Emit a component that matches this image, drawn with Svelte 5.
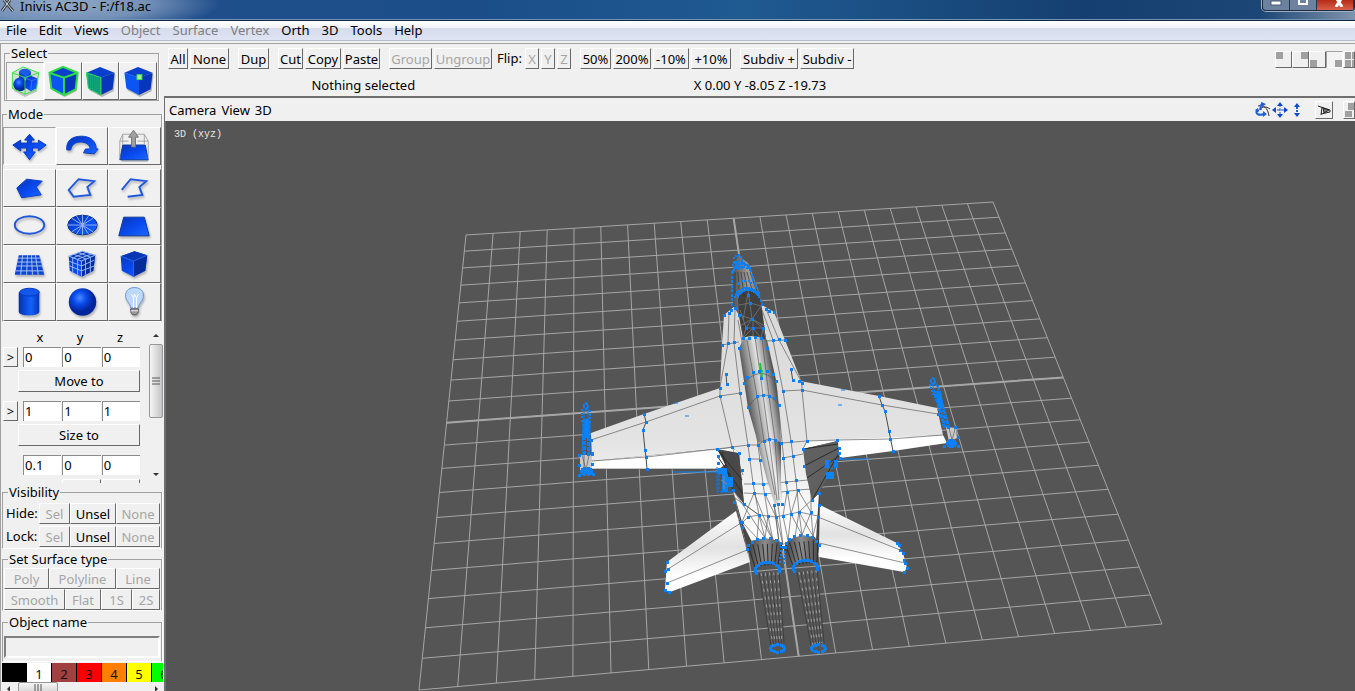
<script lang="ts">
  type Pt = number[];

  const menus = [
    { label: "File" }, { label: "Edit" }, { label: "Views" },
    { label: "Object", off: true }, { label: "Surface", off: true }, { label: "Vertex", off: true },
    { label: "Orth" }, { label: "3D" }, { label: "Tools" }, { label: "Help" }
  ];

  const toolGroups = [
    [{ t: "All", w: 20 }, { t: "None", w: 39 }],
    [{ t: "Dup", w: 31 }],
    [{ t: "Cut", w: 25 }, { t: "Copy", w: 36 }, { t: "Paste", w: 37 }],
    [{ t: "Group", w: 43, off: true }, { t: "Ungroup", w: 58, off: true }]
  ];
  const flips = ["X", "Y", "Z"];
  const scaleGroups = [
    [{ t: "50%", w: 31 }, { t: "200%", w: 38 }, { t: "-10%", w: 36 }, { t: "+10%", w: 40 }],
    [{ t: "Subdiv +", w: 58 }, { t: "Subdiv -", w: 54 }]
  ];

  const selectModes = ["group", "object", "surface", "vertex"];
  const modes = ["move", "rotate", "extrude"];
  const shapes = [
    "polygon", "closed line", "open line",
    "ellipse", "disk", "rectangle",
    "mesh", "box grid", "box",
    "cylinder", "sphere", "light"
  ];
  const axes = ["x", "y", "z"];
  const transforms = [
    { action: "Move to", values: ["0", "0", "0"] },
    { action: "Size to", values: ["1", "1", "1"] }
  ];
  const palette = [
    { n: "", c: "#000000" }, { n: "1", c: "#ffffff" }, { n: "2", c: "#a04040" },
    { n: "3", c: "#ff0000" }, { n: "4", c: "#ff8000" }, { n: "5", c: "#ffff00" }, { n: "6", c: "#00ff00" }
  ];

  let selectMode = "group";
  let mode = "move";
  let objectName = "";

  // ground plane: unit square projected onto four corners
  const corners: Pt[] = [[466, 235], [993, 202], [1162, 624], [419, 690]];
  function project(u: number, v: number): Pt {
    const [[x0, y0], [x1, y1], [x2, y2], [x3, y3]] = corners;
    const dx1 = x1 - x2, dx2 = x3 - x2, sx = x0 - x1 + x2 - x3;
    const dy1 = y1 - y2, dy2 = y3 - y2, sy = y0 - y1 + y2 - y3;
    const det = dx1 * dy2 - dx2 * dy1;
    const g = (sx * dy2 - dx2 * sy) / det;
    const h = (dx1 * sy - sx * dy1) / det;
    const w = g * u + h * v + 1;
    return [
      ((x1 - x0 + g * x1) * u + (x3 - x0 + h * x3) * v + x0) / w,
      ((y1 - y0 + g * y1) * u + (y3 - y0 + h * y3) * v + y0) / w
    ];
  }
  const seg = (a: Pt, b: Pt) => `M${a[0].toFixed(1)} ${a[1].toFixed(1)}L${b[0].toFixed(1)} ${b[1].toFixed(1)}`;
  let gridPath = "";
  for (let i = 0; i <= 20; i++) {
    const t = i / 20;
    gridPath += seg(project(t, 0), project(t, 1)) + seg(project(0, t), project(1, t));
  }
  const axisPath = seg(project(0.5, 0), project(0.5, 1)) + seg(project(0, 0.5), project(1, 0.5));

  const lerp = (a: Pt, b: Pt, t: number): Pt => [a[0] + (b[0] - a[0]) * t, a[1] + (b[1] - a[1]) * t];
  // n lines strung between two edges
  function fan(a: Pt, b: Pt, c: Pt, d: Pt, n: number) {
    let out = "";
    for (let i = 0; i <= n; i++) out += seg(lerp(a, b, i / n), lerp(c, d, i / n));
    return out;
  }
  function ring(cx: number, cy: number, rx: number, ry: number, n: number, from = 0, to = 360) {
    const out: Pt[] = [];
    for (let i = 0; i < n; i++) {
      const a = ((from + ((to - from) * i) / n) * Math.PI) / 180;
      out.push([Math.round(cx + rx * Math.cos(a)), Math.round(cy + ry * Math.sin(a))]);
    }
    return out;
  }
  function strip(a: Pt, b: Pt, n: number, spread: number) {
    const out: Pt[] = [];
    for (let i = 0; i <= n; i++) {
      const p = lerp(a, b, i / n).map(Math.round);
      out.push([p[0] - spread, p[1]], [p[0] + spread, p[1] + 1]);
    }
    return out;
  }

  const vertices: Pt[] = [
    // left wing and side
    [644, 414], [646, 422], [643, 430], [645, 450], [646, 457], [647, 469], [591, 440], [592, 453], [592, 464],
    [720, 388], [720, 396], [732, 447], [740, 393], [748, 445], [749, 459], [760, 460], [742, 470],
    [724, 315], [729, 313], [735, 308], [731, 310], [722, 345], [728, 343], [734, 342], [726, 374], [727, 384],
    [717, 449], [718, 456], [718, 463], [739, 453], [744, 504],
    // right wing and side
    [879, 396], [882, 405], [885, 411], [889, 431], [890, 439], [893, 451], [938, 414], [802, 383], [802, 390],
    [783, 391], [807, 441], [837, 440], [839, 448], [839, 453], [840, 458], [803, 449], [804, 466],
    [766, 309], [769, 311], [774, 312], [773, 340], [779, 339], [785, 340], [791, 369], [793, 380], [799, 381],
    // canopy and spine
    [748, 295], [750, 303], [752, 319], [746, 328], [753, 328], [763, 328], [743, 338], [749, 338], [755, 337], [761, 338],
    [739, 315], [739, 348], [767, 348], [747, 377], [753, 372], [759, 371], [767, 371], [773, 374], [761, 378], [776, 381], [744, 383],
    [748, 407], [757, 396], [763, 395], [769, 396], [774, 398], [779, 405],
    [758, 445], [764, 441], [769, 439], [775, 440], [781, 443], [791, 441], [783, 458], [793, 456],
    // rear deck
    [753, 483], [763, 484], [754, 493], [765, 494], [786, 482], [796, 480], [787, 492], [798, 490],
    [774, 505], [778, 504], [782, 504], [742, 522], [748, 517], [759, 515], [768, 516], [776, 517], [783, 516], [791, 514],
    [799, 512], [811, 512], [818, 517], [733, 490], [734, 502], [740, 522], [742, 527], [812, 500], [819, 493], [819, 505],
    // tail planes
    [667, 562], [668, 569], [665, 571], [667, 583], [665, 590], [669, 592],
    [897, 543], [900, 550], [903, 553], [905, 563], [907, 568], [904, 572], [899, 545], [904, 560],
    // engines
    ...ring(765, 549, 18, 11, 9, 180, 370), ...ring(802, 547, 17, 12, 9, 180, 370),
    ...ring(767, 570, 12, 8, 14, 160, 380), ...ring(805, 568, 12, 8, 14, 160, 380),
    ...ring(777, 648, 7, 4, 12), ...ring(818, 648, 7, 4, 12),
    // wing tips
    ...ring(586, 471, 5, 3, 10), ...ring(951, 443, 4, 3, 10),
    [579, 455], [592, 454], [579, 465], [579, 475], [593, 474],
    [955, 427], [958, 437], [944, 446], [958, 446]
  ];

  const denseVertices: Pt[] = [
    // nose
    ...ring(738, 260, 4, 5, 9), ...ring(739, 265, 6, 4, 12), ...ring(742, 269, 8, 5, 14, 180, 360), ...ring(742, 272, 9, 5, 12, 180, 360),
    ...strip([732, 272], [732, 304], 7, 0), ...strip([752, 275], [762, 304], 7, 0),
    ...ring(745, 284, 7, 3, 6, 180, 360), ...ring(747, 299, 12, 11, 18, 190, 350), ...ring(748, 297, 10, 7, 14, 180, 360),
    ...strip([783, 547], [782, 562], 4, 2),
    // wing tip rails
    ...ring(586, 406, 2, 3, 7), ...strip([586, 410], [586, 421], 3, 4),
    ...ring(933, 381, 2, 3, 7), ...strip([934, 385], [937, 394], 3, 4)
  ];
  const rails = [...strip([586, 420], [586, 454], 14, 2), ...strip([936, 392], [946, 427], 14, 2)];
</script>

<svelte:head><title>AC3D</title></svelte:head>

<svg class="defs" width="0" height="0" aria-hidden="true">
  <defs>
    <linearGradient id="blue" x1="0" y1="0" x2="1" y2="1">
      <stop offset="0" stop-color="#0b36b0" /><stop offset="0.5" stop-color="#0848ee" /><stop offset="1" stop-color="#1b68ff" />
    </linearGradient>
    <linearGradient id="tube"><stop offset="0" stop-color="#0530b0" /><stop offset="0.6" stop-color="#1262ff" /><stop offset="1" stop-color="#0535b8" /></linearGradient>
    <radialGradient id="ball" cx="0.4" cy="0.35"><stop offset="0" stop-color="#4a8cff" /><stop offset="0.45" stop-color="#0b4dee" /><stop offset="1" stop-color="#02249a" /></radialGradient>
    <linearGradient id="spine" gradientUnits="userSpaceOnUse" x1="742" y1="383" x2="776" y2="377">
      <stop offset="0" stop-color="#444" /><stop offset="0.24" stop-color="#8c8c8c" /><stop offset="0.55" stop-color="#e2e2e2" />
      <stop offset="0.75" stop-color="#a4a4a4" /><stop offset="1" stop-color="#3d3d3d" />
    </linearGradient>
    <linearGradient id="tailspine" gradientUnits="userSpaceOnUse" x1="757" y1="460" x2="782" y2="455">
      <stop offset="0" stop-color="#555" /><stop offset="0.3" stop-color="#bbb" /><stop offset="0.6" stop-color="#f0f0f0" /><stop offset="1" stop-color="#4d4d4d" />
    </linearGradient>
    <linearGradient id="skin" gradientUnits="userSpaceOnUse" x1="0" y1="310" x2="0" y2="545">
      <stop offset="0" stop-color="#d9d9d9" /><stop offset="0.55" stop-color="#e3e3e3" /><stop offset="0.8" stop-color="#f6f6f6" /><stop offset="1" stop-color="#fff" />
    </linearGradient>
    <linearGradient id="tailplane" x1="0" y1="0" x2="0" y2="1"><stop offset="0" stop-color="#fff" /><stop offset="0.45" stop-color="#e2e2e2" /><stop offset="0.8" stop-color="#fff" /></linearGradient>
    <linearGradient id="nose"><stop offset="0" stop-color="#4c4c4c" /><stop offset="0.5" stop-color="#a0a0a0" /><stop offset="1" stop-color="#484848" /></linearGradient>
    <linearGradient id="nozzle"><stop offset="0" stop-color="#3d3d3d" /><stop offset="0.5" stop-color="#8b8b8b" /><stop offset="1" stop-color="#4a4a4a" /></linearGradient>
  </defs>
</svg>

<div class="window">
  <header class="titlebar">
    <svg class="logo" width="16" height="12" viewBox="0 0 16 12">
      <path d="M2 11L7 4L13 11M7 4L4 0M7 4L10 0" fill="none" stroke="#3b4048" stroke-width="3" />
      <path d="M2 11L7 4L13 11M7 4L4 0M7 4L10 0" fill="none" stroke="#d5d8dc" stroke-width="1" />
    </svg>
    <span class="title">Inivis AC3D - F:/f18.ac</span>
    <div class="controls">
      <button aria-label="Minimize"><svg width="12" height="6"><rect x="1" y="1" width="10" height="4" fill="#fff" stroke="#4a5a70" /></svg></button>
      <button aria-label="Maximize"><svg width="12" height="6"><path d="M2 0V4H10V0" fill="none" stroke="#fff" stroke-width="2" /></svg></button>
      <button class="close" aria-label="Close"><svg width="14" height="7"><path d="M4 7L7 2L10 7M7 2L5 -1M7 2L9 -1" fill="none" stroke="#fff" stroke-width="3" /></svg></button>
    </div>
  </header>

  <nav class="menubar">
    {#each menus as m}
      <button disabled={m.off}>{m.label}</button>
    {/each}
  </nav>

  <div class="work">
    <aside class="side">
      <fieldset class="select">
        <legend>Select</legend>
        {#each selectModes as s}
          <button class="bevel" class:down={selectMode === s} aria-label={s} on:click={() => (selectMode = s)}>
            <svg width="36" height="35" viewBox="0 0 36 36">
              {#if s === "group"}
                <path d="M5 9L16 3L32 9L30 26L18 31L5 25Z" fill="#d7dbd8" />
                <path d="M6 25L18 31L30 26L31 28L18 34L7 28Z" fill="#0003" />
                <path d="M12 8V15H24V8Z" fill="url(#tube)" /><ellipse cx="18" cy="8" rx="6" ry="3" fill="#1b5ce6" />
                <circle cx="13" cy="21" r="7" fill="url(#ball)" />
                <path d="M19 15L24 12L31 15L30 25L24 28L19 25Z" fill="url(#blue)" /><path d="M19 15L25 17L31 15M25 17L24 28" stroke="#2f78ff" fill="none" />
                <path d="M5 9L16 3L32 9L30 26L18 31L5 25ZM5 9L18 14L32 9M18 14V31" fill="none" stroke="#34e03c" stroke-width="1" />
              {:else}
                <path d="M4 9L18 3L33 9L31 26L19 32L6 25Z" fill="#000" opacity="0.25" transform="translate(1 2)" />
                <path d="M4 9L18 3L33 9L19 14Z" fill="#0a3fce" />
                <path d="M4 9L19 14V32L6 25Z" fill="#0b55f5" />
                <path d="M33 9L19 14V32L31 26Z" fill="#0735bb" />
                {#if s === "object"}
                  <path d="M4 9L18 3L33 9L31 26L19 32L6 25ZM4 9L19 14L33 9M19 14V32" fill="none" stroke="#30dc45" stroke-width="2" />
                {:else if s === "surface"}
                  <path d="M4 9L19 14V32L6 25Z" fill="#14b080" stroke="#2fe050" />
                  <path d="M7 11V25M9 12V27M11 12V28M13 13V29M15 14V30M17 14V31" stroke="#086a72" stroke-dasharray="1 1" />
                {:else}
                  <rect x="17" y="11" width="5" height="5" fill="#a9f58c" stroke="#3de04b" />
                {/if}
              {/if}
            </svg>
          </button>
        {/each}
      </fieldset>

      <fieldset class="mode">
        <legend>Mode</legend>
        <div class="cells">
          {#each modes as m}
            <button class="bevel" class:down={mode === m} aria-label={m} on:click={() => (mode = m)}>
              <svg class:icon={m !== "extrude"} width="51" height="36" viewBox="0 0 52 36">
                {#if m === "move"}
                  <path d="M26 6L31 12H28V15H35V12L43 17L35 23V20H29V24H32L26 32L20 24H23V20H17V23L9 17L17 12V15H24V12H21Z" fill="url(#blue)" stroke="#0a3cc8" />
                {:else if m === "rotate"}
                  <path d="M10 22C9 12 16 8 25 8C34 8 40 13 40 21L42 21L38 26L27 25L29 21H34C33 16 29 14 24 14C18 14 15 17 14 22Z" fill="url(#blue)" stroke="#0a3cc8" />
                {:else}
                  <path d="M12 32H41L39 34H13Z" fill="#0004" />
                  <path d="M14 17H37L40 32H11Z" fill="url(#blue)" stroke="#0a3aa8" />
                  <path d="M14 17V6H36V17M11 31V13L14 6M36 6L40 13V31M11 13H20M29 13H40" fill="none" stroke="#a5a5a5" />
                  <path d="M25 2L30 9H27V19H23V9H20Z" fill="#a0a0a0" stroke="#747474" />
                {/if}
              </svg>
            </button>
          {/each}
        </div>
        <div class="cells">
          {#each shapes as s}
            <button class="bevel" class:down={mode === s} aria-label={s} on:click={() => (mode = s)}>
              <svg class="icon" width="51" height="36" viewBox="0 0 52 36">
                {#if s === "polygon"}
                  <path d="M13 18L23 9L39 11L33 17L38 25L18 28Z" fill="url(#blue)" stroke="#0a3fc8" />
                {:else if s === "closed line"}
                  <path d="M12 20L22 9L38 11L31 17L34 25L17 27Z" fill="none" stroke="#2058dc" stroke-width="2" />
                {:else if s === "open line"}
                  <path d="M13 20L22 9L38 11L31 17L34 25L19 27" fill="none" stroke="#2058dc" stroke-width="2" />
                {:else if s === "ellipse"}
                  <ellipse cx="26" cy="17" rx="15" ry="9" fill="none" stroke="#2058dc" stroke-width="2" />
                {:else if s === "disk"}
                  <ellipse cx="26" cy="17" rx="15" ry="10" fill="url(#blue)" stroke="#0b3190" />
                  <path d="M11 17H41M26 7V27M15 10L37 24M15 24L37 10M20 8L32 26M32 8L20 26" stroke="#90b2ee" />
                {:else if s === "rectangle"}
                  <path d="M15 9H36L41 28H10Z" fill="url(#blue)" stroke="#0b3699" />
                {:else if s === "mesh"}
                  <path d="M15 9H36L41 29H11Z" fill="#0d45d2" />
                  <path d="M14 12H37M13 16H38M12 20H39M12 25H40M19 9L17 29M24 9L23 29M28 9L29 29M32 9L35 29" stroke="#a8c2f2" />
                {:else if s === "box grid" || s === "box"}
                  <path d="M12 10L26 5L39 9L37 25L25 31L13 25Z" fill="url(#blue)" />
                  <path d="M12 10L26 5L39 9L25 15Z" fill="#0a36b6" />
                  <path d="M25 15L39 9L37 25L25 31Z" fill="#062c9c" />
                  <path d="M12 10L25 15L39 9M25 15V31" fill="none" stroke="#2568e8" />
                  {#if s === "box grid"}
                    <path d="M12 10L26 5L39 9L25 15ZM17 8L30 13M21 6L34 11M16 12L30 6M21 13L35 8M16 12V27M21 13V29M29 13V29M34 11V27M12 15L25 20L38 14M13 20L25 25L38 20M25 15V31" fill="none" stroke="#96b7f4" />
                  {/if}
                {:else if s === "cylinder"}
                  <path d="M15 8V28C15 33 36 33 36 28V8Z" fill="url(#tube)" />
                  <ellipse cx="26" cy="8" rx="10" ry="4" fill="#1157e8" stroke="#0a38bc" />
                {:else if s === "sphere"}
                  <circle cx="26" cy="18" r="14" fill="url(#ball)" />
                {:else}
                  <path d="M22 24C22 19 16 17 17 10C18 1 34 1 35 10C36 17 30 19 30 24Z" fill="#bcd8fa" stroke="#6b96d4" />
                  <path d="M23 10L25 14L26 10L28 14L30 10M25 14V24M28 14V24" fill="none" stroke="#fff" />
                  <path d="M22 25H30V28L28 31H24L22 28Z" fill="#999" stroke="#5a5a5a" /><path d="M22 27H30" stroke="#eee" />
                {/if}
              </svg>
            </button>
          {/each}
        </div>
      </fieldset>

      <section class="numeric">
        <div class="numeric-body">
          <div class="axes">
            {#each axes as a}<span>{a}</span>{/each}
          </div>
          {#each transforms as t}
            <div class="xyz">
              <button class="bevel pick" aria-label="Pick {t.action}">&gt;</button>
              {#each t.values as v, i}
                <input type="text" value={v} aria-label="{t.action} {axes[i]}" />
              {/each}
            </div>
            <button class="bevel apply">{t.action}</button>
          {/each}
          <div class="xyz">
            <span class="pick"></span>
            <input type="text" value="0.1" aria-label="Offset x" />
            <input type="text" value="0" aria-label="Offset y" />
            <input type="text" value="0" aria-label="Offset z" />
          </div>
          <div class="xyz next"><i class="bevel"></i><i class="bevel"></i></div>
        </div>
        <div class="vscroll">
          <svg width="14" height="10"><path d="M4 7H10L7 4Z" fill="#333" /></svg>
          <div class="vthumb"><svg width="8" height="8"><path d="M0 1H8M0 4H8M0 7H8" stroke="#555" /></svg></div>
          <svg width="14" height="10"><path d="M4 3H10L7 6Z" fill="#333" /></svg>
        </div>
      </section>

      <fieldset class="visibility">
        <legend>Visibility</legend>
        {#each ["Hide:", "Lock:"] as row}
          <div class="vis">
            <span>{row}</span>
            <button class="bevel" disabled>Sel</button>
            <button class="bevel">Unsel</button>
            <button class="bevel" disabled>None</button>
          </div>
        {/each}
      </fieldset>

      <fieldset class="surface">
        <legend>Set Surface type</legend>
        <div class="types">
          <button class="bevel" disabled>Poly</button>
          <button class="bevel" disabled>Polyline</button>
          <button class="bevel" disabled>Line</button>
        </div>
        <div class="types shading">
          <button class="bevel" disabled>Smooth</button>
          <button class="bevel" disabled>Flat</button>
          <button class="bevel" disabled>1S</button>
          <button class="bevel" disabled>2S</button>
        </div>
      </fieldset>

      <fieldset class="object">
        <legend>Object name</legend>
        <input type="text" aria-label="Object name" bind:value={objectName} />
      </fieldset>

      <div class="palette">
        {#each palette as p}
          <button style="background: {p.c}" aria-label="Colour {p.n || 0}">{p.n}</button>
        {/each}
      </div>
      <div class="hscroll">
        <svg width="16" height="12"><path d="M9 4V10L6 7Z" fill="#333" /></svg>
        <div class="hthumb"><svg width="8" height="8"><path d="M1 0V8M4 0V8M7 0V8" stroke="#555" /></svg></div>
        <svg width="16" height="12"><path d="M8 4V10L11 7Z" fill="#333" /></svg>
      </div>
    </aside>

    <main class="main">
      <div class="toolbar">
        {#each toolGroups as group}
          <div class="group">
            {#each group as b}
              <button class="bevel" style="width: {b.w}px" disabled={b.off}>{b.t}</button>
            {/each}
          </div>
        {/each}
        <div class="group flip">
          <span>Flip:</span>
          {#each flips as f}<button class="bevel" disabled>{f}</button>{/each}
        </div>
        {#each scaleGroups as group}
          <div class="group">
            {#each group as b}
              <button class="bevel" style="width: {b.w}px">{b.t}</button>
            {/each}
          </div>
        {/each}
        <div class="views">
          <button class="bevel" aria-label="View 1"><svg width="15" height="15"><path d="M0 0H7V7H0Z" fill="#a0a0a0" /></svg></button>
          <button class="bevel" aria-label="View 2"><svg width="15" height="15"><path d="M8 0H15V7H8Z" fill="#a0a0a0" /></svg></button>
          <button class="bevel" aria-label="View 3"><svg width="15" height="15"><path d="M0 8H7V15H0Z" fill="#a0a0a0" /></svg></button>
          <button class="bevel down" aria-label="View 4"><svg width="15" height="15"><path d="M8 8H15V15H8Z" fill="#a0a0a0" /></svg></button>
          <button class="bevel cut" aria-label="All views"><svg width="15" height="15"><path d="M1 0H7V7H1ZM8 0H15V7H8ZM1 8H7V15H1ZM8 8H15V15H8Z" fill="#a0a0a0" /></svg></button>
        </div>
      </div>

      <div class="status">
        <span>Nothing selected</span>
        <span>X 0.00 Y -8.05 Z -19.73</span>
      </div>

      <div class="viewhead">
        <button>Camera</button>
        <button>View</button>
        <button>3D</button>
        <div class="navs">
          <svg width="54" height="18" viewBox="0 0 54 18">
            <path d="M4 5C9 3 14 7 15 15M3 11C7 5 12 5 16 8" fill="none" stroke="#333" />
            <path d="M9 2C6 4 6 6 7 9M3 9C1 13 5 15 10 13" fill="none" stroke="#1f5fd8" stroke-width="2" />
            <path d="M7 1L12 3L8 6ZM9 10L13 13L9 16ZM1 9L4 7L5 11Z" fill="#1f5fd8" />
            <path d="M19 9H33M26 3V16" stroke="#1f5fd8" stroke-dasharray="3 1" />
            <path d="M26 1L29 5H23ZM26 17L29 13H23ZM18 9L22 6V12ZM34 9L30 6V12ZM43 2L46 6H40ZM43 16L46 12H40Z" fill="#0b48cc" />
            <path d="M43 6V12" stroke="#1f5fd8" stroke-width="2" stroke-dasharray="2 1" />
          </svg>
          <button class="bevel" aria-label="Look"><svg width="16" height="16"><path d="M2 4L14 8L14 10L5 12M6 5L5 13" fill="none" stroke="#222" stroke-width="1" /><path d="M7 6L13 8L8 11Z" fill="#777" stroke="#222" /></svg></button>
          <button class="bevel cut" aria-label="Maximize view"><svg width="15" height="16"><path d="M4 1H15V8H4ZM1 9H8V15H1Z" fill="#a0a0a0" /></svg></button>
        </div>
      </div>

      <div class="viewport">
        <svg class="scene" viewBox="166 121 1189 570" preserveAspectRatio="xMinYMin meet">
          <path d={gridPath} class="grid" />
          <path d={axisPath} class="grid axis" />
          <text x="174" y="137">3D (xyz)</text>

          <!-- tail planes -->
          <path d="M736 511L667 562L665 590L670 592L750 562Z" fill="url(#tailplane)" />
          <path d="M818 504L897 543L903 553L907 568L904 572L819 557Z" fill="url(#tailplane)" />
          <path class="wire" d="M741 523L668 569M747 550L667 583M818 517L900 550M819 543L905 563" />

          <!-- exhaust -->
          <path d="M759 573L779 572L784 643L771 645Z M797 572L817 570L824 643L811 645Z" fill="#5c5c5c" />
          <path class="plume" d={fan([759, 573], [779, 572], [771, 645], [784, 643], 5) + fan([797, 572], [817, 570], [811, 645], [824, 643], 5)} />
          <path class="mesh" d={fan([761, 573], [778, 572], [773, 645], [782, 643], 4) + fan([799, 572], [816, 570], [813, 645], [822, 643], 4)} />

          <!-- wings -->
          <path d="M591 433L644 414L720 388L742 390L745 446L592 461Z" fill="url(#skin)" />
          <path d="M592 461L717 449L732 448L740 453L719 469H592Z" fill="#fff" />
          <path d="M795 380L879 396L937 408L943 435L838 441L807 441L790 442Z" fill="url(#skin)" />
          <path d="M807 441L943 435L947 443L893 451L840 458L837 441L803 449Z" fill="#fff" />

          <!-- fuselage -->
          <path d="M724 315L735 306L762 305L774 312L785 340L802 383L807 441L803 449L812 500L819 493L819 543L802 535L783 550L765 538L747 549L733 490L744 504L739 453L732 447L717 449L720 388L722 345Z" fill="url(#skin)" />
          <path d="M717 449L739 453L744 504L733 490L728 470Z" fill="#484848" />
          <path d="M733 490L742 522L752 542L747 549Z" fill="#484848" />
          <path d="M803 449L838 441L839 456L819 493L812 500L806 474Z" fill="#606060" />
          <path d="M819 493L816 540L819 545L820 500Z" fill="#454545" />
          <path class="wire" d="M591 440L646 422L720 396L740 393M592 461L646 457L717 449L748 445L758 445" />
          <path class="wire" d="M783 391L802 390L882 405L938 414M781 443L807 441L837 440L890 439L943 435M592 469H719" />
          <path class="hinge" d="M644 414L646 422L643 430L645 450L646 457L647 469M879 396L882 405L885 411L889 431L893 451M726 374L727 386M791 369L793 382" />
          <path class="wire" d="M729 313L728 343L720 387V396L732 447L743 475M735 308L734 343L740 393L748 445L753 483L759 515M722 345L739 342M738 320L749 380L758 445L763 484L768 516" />
          <path class="wire" d="M766 309L779 340L802 383V390L807 441L803 449M762 310L773 340L783 391L791 441L796 480L799 512M767 345L777 391L786 482L791 514M766 341L785 340" />
          <path class="wire" d="M749 459H760M783 458L803 454M744 484L765 484L786 482L808 480M744 493L765 494L798 490L811 489M742 523L748 517L759 515L776 517L799 512L818 516" />
          <path class="dark" d="M717 449L742 480M718 457L743 494M722 452L733 490M803 449L838 444M804 466L839 448M807 478L839 456M812 500L839 453" />
          <path class="wire" d="M733 490L765 538M735 498L759 515L757 539M754 493L742 522L757 538M754 493L773 540L759 515L765 538L768 516L773 540M765 494L776 517L779 542M744 504L759 515" />
          <path class="wire" d="M787 492L783 516L788 540L791 514L802 535L799 512L795 537M798 490L811 512L802 535M798 490L791 514M819 493L799 512L813 536L818 516M811 489V512L813 536M778 505L783 545L774 505L779 542" />

          <path d="M743 340Q754 334 767 340L776 380L780 420L781 443H758L748 408L739 348Z" fill="url(#spine)" />
          <path d="M757 442H781V480L782 505H775L767 480Z" fill="url(#tailspine)" />
          <path class="wire" d="M747 340L757 396L764 441L775 495M755 337L763 395L769 439L777 500M762 339L769 396L775 440L779 500M744 383Q760 365 776 381M748 407Q764 384 779 405M758 445Q770 434 781 443" />
          <path d="M733 290L732 270L738 255L748 263L760 293L766 340Q754 333 743 338L739 315L733 306Z" fill="url(#nose)" />
          <path d="M738 297L748 287L760 298L766 340Q754 333 743 338L739 315Z" fill="#404040" />
          <path class="plume" d={fan([735, 272], [750, 272], [735, 298], [758, 294], 5)} />
          <path class="seam" d="M739 305L750 303L761 306L752 319L739 315M748 290L752 319L746 328L740 310M752 319L763 328L753 328L746 328L743 338L753 328L761 338L763 328L766 340M753 319V337M740 326L752 319L765 326M748 293L743 320" />
          <path d="M760 363L762 377M758 371H763" stroke="#14c832" stroke-width="2" fill="none" />

          <!-- engines -->
          <path d="M747 549L750 541L765 538L779 541L783 549L778 564L767 561L755 568Z" fill="url(#nozzle)" />
          <path d="M784 549L788 540L802 535L815 537L819 545L817 563L804 559L793 567Z" fill="url(#nozzle)" />
          <path class="dark" d={fan([748, 545], [782, 543], [755, 567], [778, 564], 7) + fan([785, 543], [818, 540], [793, 566], [817, 562], 7)} />

          <!-- wing tip rails and stores -->
          <path d="M580 455H592V470H580ZM946 427L956 428L957 438L949 442Z" fill="#c9c9c9" />
          <path class="wire" d="M582 455L586 470L589 455M584 455V470M949 428L952 440L955 429" />
          <path class="vertexline" d="M583 421L582 455M590 421L590 455M584 406V421M588 406V421M931 381L937 398L946 428M935 381L941 398L950 428" />
          <path d="M584 419H589V438H584ZM936 391L941 392L944 408L939 408ZM583 468H590V474H583ZM948 440H954V445H948Z" fill="#0a83fb" />
          <path d="M718 468H727V474H718ZM722 474H728V492H722ZM728 477H733V487H728ZM825 460H829V468H825ZM834 460H838V468H834ZM826 472H834V479H826Z" fill="#0a83fb" />
          <path d="M724 476V489M721 480L727 484" stroke="#808a94" fill="none" />
          <path class="vertexline" d="M717 467V492H731M719 474V491M831 461L824 467L835 469" stroke-dasharray="3 1" />
          <path class="vertexline" d="M673 472H718M674 403H678M841 459H869M841 390H845M685 416H689M838 405H842" />

          {#each vertices as [x, y]}<rect x={x - 1} y={y - 1} width="3" height="3" />{/each}
          {#each denseVertices as [x, y]}<rect x={x - 1} y={y - 1} width="2" height="2" />{/each}
          {#each rails as [x, y]}<rect x={x - 1} y={y - 1} width="3" height="2" />{/each}
        </svg>
      </div>
    </main>
  </div>
</div>

<style>
  :global(body) { background: #f0f0f0; }
  .defs { position: absolute; }
  .window { display: flex; flex-direction: column; height: 100vh; overflow: hidden; background: #f0f0f0; color: #000; font: 13px/18px "Noto Sans", "Open Sans", sans-serif; }
  button, input { font: inherit; color: inherit; margin: 0; box-sizing: border-box; }
  button { padding: 0; border: 0; background: none; white-space: nowrap; }
  button:disabled { color: #a5a5a5; }
  svg { display: block; flex: none; }
  .bevel { background: #f0f0f0; border: 1px solid; border-color: #fff #696969 #696969 #fff; display: flex; align-items: center; justify-content: center; overflow: hidden; }
  .bevel.down { border-color: #a0a0a0 #fff #fff #a0a0a0; background: #f3f3f3; }

  .titlebar { display: flex; height: 20px; flex: none; align-items: flex-start; border-bottom: 1px solid #0b2745; background: radial-gradient(ellipse 160px 30px at 60px 4px, #94a9c6 0, #7390b7 55%, transparent 100%), linear-gradient(90deg, #234f8c, #1b4e89 35%, #1f5a91 55%, #153f70 80%, #1b4675 93%, #8094ad); box-shadow: inset 0 -1px #7793b3; }
  .title { flex: 1; padding-left: 4px; line-height: 12px; }
  .controls { display: flex; border: 1px solid #1b2c44; border-top: 0; border-radius: 0 0 4px 4px; height: 10px; overflow: hidden; box-shadow: 0 0 0 1px #9fb0c5; }
  .controls button { width: 27px; display: flex; justify-content: center; background: #6d829e; border-right: 1px solid #26384f; }
  .controls .close { width: 37px; padding-left: 8px; background: linear-gradient(#b52c18, #d8604a); }

  .menubar { display: flex; flex: none; height: 19px; padding-left: 6px; gap: 12px; background: linear-gradient(#fff, #f0f3fa 35%, #d6dcec 36%, #dfe4f4); border-bottom: 1px solid #b6bccc; }
  .menubar button { line-height: 19px; }
  .menubar button:disabled { color: #808080; }
  .work { display: flex; flex: 1; min-height: 0; margin-top: 2px; border-top: 1px solid #a0a0a0; }

  .side { width: 163px; flex: none; display: flex; flex-direction: column; box-sizing: border-box; border-left: 1px solid #a0a0a0; overflow: hidden; }
  fieldset { margin: 0 1px; padding: 0 1px; border: 1px solid #a0a0a0; border-bottom-color: #fff; min-width: 0; box-shadow: 1px 0 #fff; }
  legend { padding: 0 1px; margin-left: 4px; height: 18px; line-height: 18px; }
  .select { display: flex; margin: 0 4px 0 3px; border-color: #a0a0a0; }
  .select button { width: 38px; height: 38px; }
  .mode { margin-top: 4px; padding: 0; }
  .mode legend { margin-bottom: 4px; }
  .cells { display: grid; grid-template-columns: repeat(3, 1fr); }
  .cells + .cells { margin-top: 4px; }
  .cells button { height: 38px; }
  .icon { filter: drop-shadow(1px 2px 1px #0004); }

  .numeric { display: flex; flex: none; height: 159px; margin: 2px 0 0 2px; }
  .numeric-body { flex: 1; overflow: hidden; padding-right: 9px; }
  .axes { display: grid; grid-template-columns: repeat(3, 1fr); height: 22px; padding: 4px 0 0 17px; box-sizing: border-box; text-align: center; }
  .xyz { display: flex; gap: 1px; height: 21px; align-items: center; }
  .xyz input { flex: 1; min-width: 0; height: 20px; padding: 0 1px; border: 0; border-top: 1px solid #8a8a8a; border-left: 1px solid #8a8a8a; background: #fff; }
  .pick { width: 15px; height: 20px; margin-right: 4px; line-height: 18px; flex: none; }
  .apply { height: 22px; width: 122px; margin: 3px 0 8px 15px; line-height: 20px; }
  .next { margin: 4px 0 0 59px; }
  .next i { flex: 1; height: 20px; }
  .vscroll { width: 14px; display: flex; flex-direction: column; align-items: center; padding: 6px 0 3px; box-sizing: border-box; }
  .vthumb { width: 12px; height: 72px; margin: 4px 0 auto; border: 1px solid #979797; border-radius: 2px; background: linear-gradient(90deg, #f6f6f6, #dcdcdc 50%, #c4c4c8); display: grid; place-items: center; }

  .visibility legend { margin-bottom: 2px; }
  .vis { display: grid; grid-template-columns: 35px 31px 46px 1fr; height: 21px; margin-bottom: 2px; }
  .vis span { padding-left: 2px; line-height: 21px; }
  .vis:last-child { margin-bottom: 1px; }
  .surface { margin-top: 1px; }
  .types { display: grid; grid-template-columns: 45px 67px 1fr; height: 21px; }
  .shading { grid-template-columns: 61px 36px 31px 1fr; }
  .object { margin-top: 2px; }
  .object input { display: block; width: 100%; height: 22px; margin: 5px 0 3px; background: #f0f0f0; border: 2px solid; border-color: #808080 #fff #fff #808080; }
  .palette { display: flex; flex: none; height: 19px; margin: 1px 0 0 1px; overflow: hidden; }
  .palette button { width: 25px; flex: none; border-right: 1px solid #000; padding-top: 4px; line-height: 15px; color: #111; }
  .hscroll { display: flex; flex: none; height: 12px; align-items: center; }
  .hthumb { width: 38px; height: 11px; margin: 0 auto 0 1px; border: 1px solid #979797; border-radius: 2px; background: linear-gradient(#f6f6f6, #d0d0d0); display: grid; place-items: center; }

  .main { flex: 1; min-width: 0; display: flex; flex-direction: column; }
  .toolbar { display: flex; flex: none; gap: 9px; padding: 4px 0 0 5px; height: 26px; box-sizing: border-box; overflow: hidden; }
  .group { display: flex; gap: 2px; flex: none; }
  .group .bevel { height: 21px; }
  .flip { margin-left: -4px; }
  .flip span { width: 26px; line-height: 21px; }
  .flip .bevel { width: 14px; }
  .views { display: flex; margin-left: auto; padding-top: 3px; flex: none; }
  .views .bevel { width: 17px; height: 17px; }
  .status { display: grid; grid-template-columns: repeat(3, 1fr); text-align: center; flex: none; height: 26px; line-height: 30px; padding-left: 2px; }
  .viewhead { display: flex; flex: none; gap: 5px; height: 23px; margin-left: 1px; padding-left: 4px; border-top: 2px solid #6f6f6f; border-left: 1px solid #6f6f6f; align-items: center; }
  .navs { display: flex; align-items: center; margin-left: auto; }
  .navs .bevel { width: 18px; height: 18px; }
  .navs svg + .bevel { margin: 0 10px 0 7px; }
  .views .cut, .navs .cut { width: 12px; justify-content: flex-start; }
  .viewport { flex: 1; min-height: 0; margin-left: 1px; border-left: 2px solid #6f6f6f; background: #555; overflow: hidden; box-sizing: border-box; }
  .scene { width: 100%; }
  .scene text { font: 10px "Liberation Mono", monospace; fill: #e6e6e6; }
  .scene rect { fill: #0a80f8; }
  .grid { stroke: #a6a6a6; stroke-width: 1; fill: none; }
  .axis { stroke-width: 2; }
  .wire { stroke: #555; stroke-width: 1; stroke-opacity: 0.65; fill: none; }
  .hinge { stroke: #4a4a4a; stroke-width: 1; fill: none; }
  .dark { stroke: #2c2c2c; stroke-width: 1; fill: none; }
  .plume { stroke: #333; stroke-width: 1; stroke-opacity: 0.7; fill: none; }
  .seam { stroke: #7d7d7d; stroke-width: 1; stroke-opacity: 0.7; fill: none; }
  .mesh { stroke: #a0a0a0; stroke-width: 1; stroke-dasharray: 3 5; fill: none; }
  .vertexline { stroke: #0a80f8; stroke-width: 1; fill: none; }
</style>
